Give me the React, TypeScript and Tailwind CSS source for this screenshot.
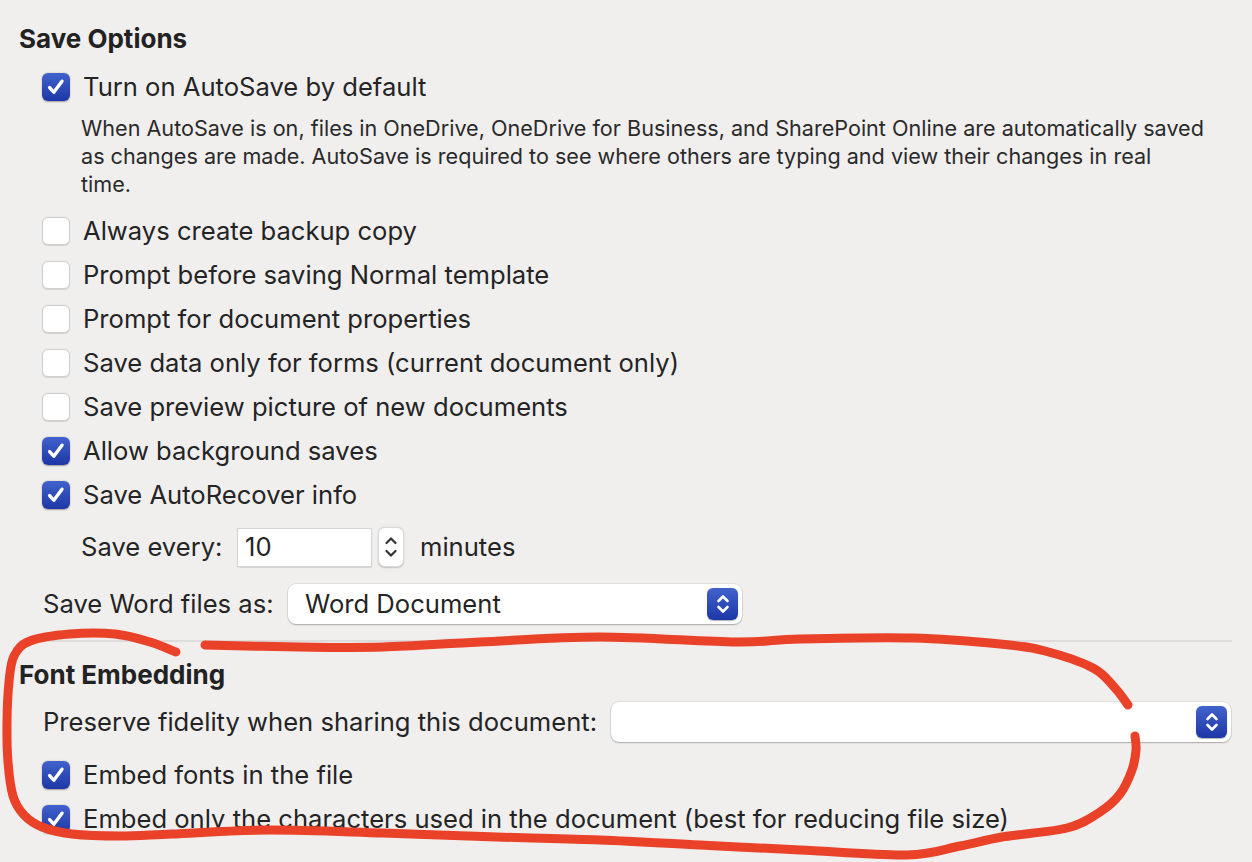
import React from 'react';

type Pt = [number, number];

// smooth path through points (catmull-rom -> cubic bezier)
function smooth(pts: Pt[]): string {
  let d = `M${pts[0][0]},${pts[0][1]}`;
  for (let i = 0; i < pts.length - 1; i++) {
    const p0 = pts[i - 1] || pts[i];
    const p1 = pts[i];
    const p2 = pts[i + 1];
    const p3 = pts[i + 2] || p2;
    const c1x = p1[0] + (p2[0] - p0[0]) / 6;
    const c1y = p1[1] + (p2[1] - p0[1]) / 6;
    const c2x = p2[0] - (p3[0] - p1[0]) / 6;
    const c2y = p2[1] - (p3[1] - p1[1]) / 6;
    d += ` C${c1x},${c1y} ${c2x},${c2y} ${p2[0]},${p2[1]}`;
  }
  return d;
}

const loopMain: Pt[] = [
  [176, 652], [150, 642], [115, 634], [70, 634], [30, 641], [14, 656], [9, 682],
  [7, 722], [8, 762], [13, 796], [24, 815], [42, 827], [72, 834], [120, 836],
  [172, 834], [268, 830], [383, 833], [497, 837], [600, 840], [700, 845],
  [800, 850], [907, 855], [960, 846], [1002, 837], [1067, 828], [1100, 812],
  [1120, 794], [1132, 770], [1136, 750], [1135, 736],
];

const loopTop: Pt[] = [
  [205, 645], [300, 647], [383, 647], [480, 642], [600, 637], [736, 642],
  [800, 639], [913, 638], [1000, 644], [1045, 651], [1093, 668], [1115, 688],
  [1128, 705],
];

function Checkbox({ checked }: { checked: boolean }) {
  if (checked) {
    return (
      <span className="flex h-[28px] w-[28px] shrink-0 items-center justify-center rounded-[6px] bg-gradient-to-b from-[#4262cc] to-[#1d37a6] shadow-[0_0.5px_1.5px_rgba(0,0,0,0.35)]">
        <svg width="22" height="22" viewBox="0 0 22 22">
          <path
            d="M4.6 11.6 L8.8 16.2 L17 5.2"
            fill="none"
            stroke="white"
            strokeWidth="3.4"
            strokeLinecap="round"
            strokeLinejoin="round"
          />
        </svg>
      </span>
    );
  }
  return (
    <span className="h-[28px] w-[28px] shrink-0 rounded-[6px] border border-[#cfcfcf] bg-white shadow-[0_0.5px_1px_rgba(0,0,0,0.12)]" />
  );
}

function CheckRow({ checked, label }: { checked: boolean; label: string }) {
  return (
    <div className="flex h-[44px] items-center gap-[13px] pl-[42px]">
      <Checkbox checked={checked} />
      <span className="text-[25.6px] text-[#242424]">{label}</span>
    </div>
  );
}

function BlueStepper() {
  return (
    <span className="flex h-[32px] w-[31px] items-center justify-center rounded-[6px] bg-gradient-to-b from-[#4262cc] to-[#1d37a6] shadow-[0_0.5px_1px_rgba(0,0,0,0.3)]">
      <svg width="16" height="24" viewBox="0 0 16 24">
        <path d="M3.5 9 L8 4.5 L12.5 9" fill="none" stroke="white" strokeWidth="2.6" strokeLinecap="round" strokeLinejoin="round" />
        <path d="M3.5 15 L8 19.5 L12.5 15" fill="none" stroke="white" strokeWidth="2.6" strokeLinecap="round" strokeLinejoin="round" />
      </svg>
    </span>
  );
}

export default function App() {
  return (
    <div
      className="relative h-[862px] w-[1252px] overflow-hidden bg-[#f0efee] text-[#242424]"
      style={{ fontFamily: 'Inter, "Liberation Sans", sans-serif' }}
    >
      <div className="flex flex-col pt-[23px]">
        <h2 className="pl-[19px] text-[26px] font-bold leading-[32px] text-[#222]">Save Options</h2>

        <div className="mt-[10px]">
          <CheckRow checked label="Turn on AutoSave by default" />
        </div>
        <p className="mt-[5px] pl-[81px] text-[21.6px] leading-[28px] text-[#2a2a2a]">
          When AutoSave is on, files in OneDrive, OneDrive for Business, and SharePoint Online are automatically saved
          <br />
          as changes are made. AutoSave is required to see where others are typing and view their changes in real
          <br />
          time.
        </p>

        <div className="mt-[11px]">
          <CheckRow checked={false} label="Always create backup copy" />
          <CheckRow checked={false} label="Prompt before saving Normal template" />
          <CheckRow checked={false} label="Prompt for document properties" />
          <CheckRow checked={false} label="Save data only for forms (current document only)" />
          <CheckRow checked={false} label="Save preview picture of new documents" />
          <CheckRow checked label="Allow background saves" />
          <CheckRow checked label="Save AutoRecover info" />
        </div>

        <div className="mt-[10px] flex h-[40px] items-center pl-[81px]">
          <span className="w-[156px] text-[25.6px]">Save every:</span>
          <span className="flex h-[39px] w-[135px] items-center border border-[#d4d4d4] bg-white pl-[7px] text-[25.6px] shadow-[0_0.5px_1px_rgba(0,0,0,0.1)]">
            10
          </span>
          <span className="ml-[6px] flex h-[40px] w-[26px] flex-col items-center justify-center rounded-[7px] border border-[#dadada] bg-white shadow-[0_0.5px_1.5px_rgba(0,0,0,0.2)]">
            <svg width="16" height="30" viewBox="0 0 16 30">
              <path d="M3.5 11 L8 6.5 L12.5 11" fill="none" stroke="#333" strokeWidth="2.2" strokeLinecap="round" strokeLinejoin="round" />
              <path d="M3.5 19 L8 23.5 L12.5 19" fill="none" stroke="#333" strokeWidth="2.2" strokeLinecap="round" strokeLinejoin="round" />
            </svg>
          </span>
          <span className="ml-[16px] text-[25.6px]">minutes</span>
        </div>

        <div className="mt-[17px] flex h-[40px] items-center pl-[43px]">
          <span className="w-[245px] text-[25.6px]">Save Word files as:</span>
          <span className="flex h-[40px] w-[454px] items-center justify-between rounded-[8px] bg-white pl-[17px] pr-[4px] text-[25.6px] shadow-[0_0_0_0.5px_rgba(0,0,0,0.12),0_1px_1.5px_rgba(0,0,0,0.25)]">
            Word Document
            <BlueStepper />
          </span>
        </div>

        <div className="ml-[19px] mt-[16px] h-[2px] w-[1213px] bg-[#dddcdb]" />

        <h2 className="mt-[17px] pl-[19px] text-[26px] font-bold leading-[32px] text-[#222]">Font Embedding</h2>

        <div className="mt-[11px] flex h-[40px] items-center pl-[43px]">
          <span className="w-[568px] text-[25.6px]">Preserve fidelity when sharing this document:</span>
          <span className="flex h-[40px] w-[620px] items-center justify-end rounded-[8px] bg-white pr-[4px] shadow-[0_0_0_0.5px_rgba(0,0,0,0.12),0_1px_1.5px_rgba(0,0,0,0.25)]">
            <BlueStepper />
          </span>
        </div>

        <div className="mt-[11px]">
          <CheckRow checked label="Embed fonts in the file" />
          <CheckRow checked label="Embed only the characters used in the document (best for reducing file size)" />
        </div>
      </div>

      {/* hand-drawn red annotation */}
      <svg className="pointer-events-none absolute left-0 top-0" width="1252" height="862" viewBox="0 0 1252 862">
        <path d={smooth(loopMain)} fill="none" stroke="#ea4129" strokeWidth="9" strokeLinecap="round" strokeLinejoin="round" />
        <path d={smooth(loopTop)} fill="none" stroke="#ea4129" strokeWidth="9" strokeLinecap="round" strokeLinejoin="round" />
      </svg>
    </div>
  );
}
